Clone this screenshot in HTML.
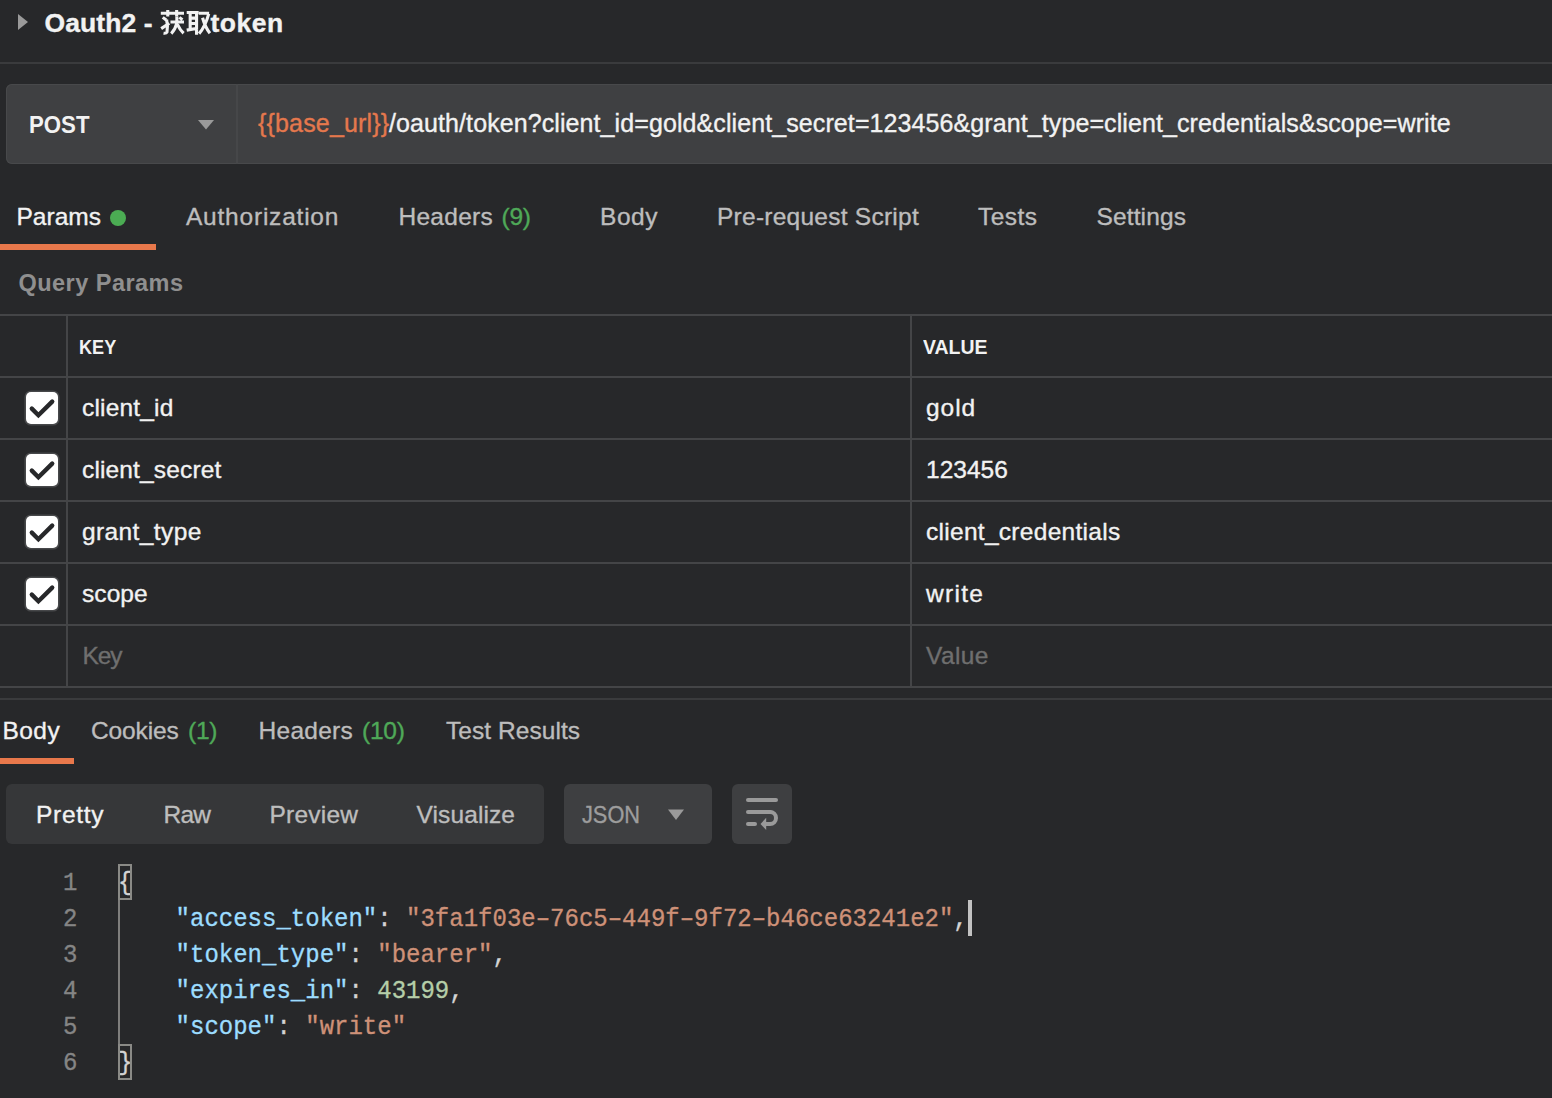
<!DOCTYPE html><html><head><meta charset="utf-8"><style>
html,body{margin:0;padding:0;}
body{width:1552px;height:1098px;overflow:hidden;background:#27282a;position:relative;font-family:'Liberation Sans', sans-serif;}
.a{position:absolute;}
.t{position:absolute;white-space:pre;line-height:1;-webkit-text-stroke:0.35px currentColor;}
</style></head><body>

<svg class="a" style="left:0;top:0" width="1552" height="1098">
<polygon points="18,14 28,22 18,30" fill="#9a9a9a"/>
</svg>
<div class="a" style="left:0;top:62px;width:1552px;height:2px;background:#3a3b3d"></div>
<div class="a" style="left:6px;top:84px;width:1560px;height:80px;border-radius:6px;background:#3f4042;box-shadow:inset 0 0 0 1px #48494b"></div>
<div class="a" style="left:236px;top:84px;width:2px;height:80px;background:#464749"></div>
<svg class="a" style="left:0;top:0" width="1552" height="300"><polygon points="198,120 214,120 206,129.5" fill="#9a9a9a"/></svg>
<div class="a" style="left:110px;top:210px;width:16px;height:16px;border-radius:50%;background:#4bac53"></div>
<div class="a" style="left:0;top:244px;width:156px;height:6px;background:#e8784b"></div>
<div class="a" style="left:0;top:314px;width:1552px;height:2px;background:#444547"></div>
<div class="a" style="left:0;top:376px;width:1552px;height:2px;background:#444547"></div>
<div class="a" style="left:0;top:438px;width:1552px;height:2px;background:#444547"></div>
<div class="a" style="left:0;top:500px;width:1552px;height:2px;background:#444547"></div>
<div class="a" style="left:0;top:562px;width:1552px;height:2px;background:#444547"></div>
<div class="a" style="left:0;top:624px;width:1552px;height:2px;background:#444547"></div>
<div class="a" style="left:0;top:686px;width:1552px;height:2px;background:#444547"></div>
<div class="a" style="left:66px;top:314px;width:2px;height:374px;background:#444547"></div>
<div class="a" style="left:910px;top:314px;width:2px;height:374px;background:#444547"></div>
<div class="a" style="left:26px;top:391.5px;width:32px;height:32.5px;border-radius:5px;background:#fff;box-shadow:0 0 0 1.6px #47484a"></div>
<svg class="a" style="left:26px;top:391.5px" width="32" height="33"><polyline points="5.8,16.6 12.4,23.2 26.2,9.6" fill="none" stroke="#27282a" stroke-width="4.4" stroke-linecap="round" stroke-linejoin="miter"/></svg>
<div class="a" style="left:26px;top:453.5px;width:32px;height:32.5px;border-radius:5px;background:#fff;box-shadow:0 0 0 1.6px #47484a"></div>
<svg class="a" style="left:26px;top:453.5px" width="32" height="33"><polyline points="5.8,16.6 12.4,23.2 26.2,9.6" fill="none" stroke="#27282a" stroke-width="4.4" stroke-linecap="round" stroke-linejoin="miter"/></svg>
<div class="a" style="left:26px;top:515.5px;width:32px;height:32.5px;border-radius:5px;background:#fff;box-shadow:0 0 0 1.6px #47484a"></div>
<svg class="a" style="left:26px;top:515.5px" width="32" height="33"><polyline points="5.8,16.6 12.4,23.2 26.2,9.6" fill="none" stroke="#27282a" stroke-width="4.4" stroke-linecap="round" stroke-linejoin="miter"/></svg>
<div class="a" style="left:26px;top:577.5px;width:32px;height:32.5px;border-radius:5px;background:#fff;box-shadow:0 0 0 1.6px #47484a"></div>
<svg class="a" style="left:26px;top:577.5px" width="32" height="33"><polyline points="5.8,16.6 12.4,23.2 26.2,9.6" fill="none" stroke="#27282a" stroke-width="4.4" stroke-linecap="round" stroke-linejoin="miter"/></svg>
<div class="a" style="left:0;top:698px;width:1552px;height:2px;background:#3a3b3d"></div>
<div class="a" style="left:0;top:758px;width:74px;height:6px;background:#e8784b"></div>
<div class="a" style="left:6px;top:784px;width:538px;height:60px;border-radius:6px;background:#363739"></div>
<div class="a" style="left:564px;top:784px;width:148px;height:60px;border-radius:6px;background:#3e3f41"></div>
<div class="a" style="left:732px;top:784px;width:60px;height:60px;border-radius:6px;background:#3e3f41"></div>
<svg class="a" style="left:0;top:780px" width="800" height="70"><polygon points="668,29.6 684,29.6 676,40" fill="#9a9a9a"/><g stroke="#9a9a9a" stroke-width="4" stroke-linecap="round" fill="none"><line x1="748" y1="20" x2="776" y2="20"/><line x1="748" y1="32" x2="770" y2="32"/><line x1="748" y1="44" x2="755" y2="44"/><path d="M770,32 a6,6 0 0 1 0,12 h-4" stroke-linecap="butt"/></g><polygon points="766.2,37.8 766.2,50 760.5,44" fill="#9a9a9a"/></svg>
<div class="t" id="t0" style="left:44.5px;top:9.77px;font-size:26.5px;font-weight:bold;color:#f2f2f2;letter-spacing:0.074px;font-family:'Liberation Sans', sans-serif">Oauth2 -</div>
<div class="t" id="t1" style="left:210.5px;top:9.77px;font-size:26.5px;font-weight:bold;color:#f2f2f2;letter-spacing:0.528px;font-family:'Liberation Sans', sans-serif">token</div>
<div class="t" id="t2" style="left:28.5px;top:113.46px;font-size:24.5px;font-weight:bold;color:#f2f2f2;transform:scaleX(0.9068);transform-origin:0 0;-webkit-text-stroke:0;font-family:'Liberation Sans', sans-serif">POST</div>
<div class="t" id="t3" style="left:258px;top:111.24px;font-size:25px;font-weight:normal;color:#e5784d;letter-spacing:0.164px;font-family:'Liberation Sans', sans-serif">{{base_url}}</div>
<div class="t" id="t4" style="left:389px;top:111.24px;font-size:25px;font-weight:normal;color:#f2f2f2;letter-spacing:0.092px;font-family:'Liberation Sans', sans-serif">/oauth/token?client_id=gold&amp;client_secret=123456&amp;grant_type=client_credentials&amp;scope=write</div>
<div class="t" id="t5" style="left:16.5px;top:205.26px;font-size:24.5px;font-weight:normal;color:#f2f2f2;letter-spacing:0.016px;font-family:'Liberation Sans', sans-serif">Params</div>
<div class="t" id="t6" style="left:186px;top:205.26px;font-size:24.5px;font-weight:normal;color:#bdbdbd;letter-spacing:0.782px;font-family:'Liberation Sans', sans-serif">Authorization</div>
<div class="t" id="t7" style="left:398.5px;top:205.26px;font-size:24.5px;font-weight:normal;color:#bdbdbd;letter-spacing:0.265px;font-family:'Liberation Sans', sans-serif">Headers</div>
<div class="t" id="t8" style="left:501.5px;top:205.26px;font-size:24.5px;font-weight:normal;color:#4fa958;letter-spacing:-0.277px;font-family:'Liberation Sans', sans-serif">(9)</div>
<div class="t" id="t9" style="left:600px;top:205.26px;font-size:24.5px;font-weight:normal;color:#bdbdbd;letter-spacing:0.552px;font-family:'Liberation Sans', sans-serif">Body</div>
<div class="t" id="t10" style="left:717px;top:205.26px;font-size:24.5px;font-weight:normal;color:#bdbdbd;letter-spacing:0.251px;font-family:'Liberation Sans', sans-serif">Pre-request Script</div>
<div class="t" id="t11" style="left:978px;top:205.26px;font-size:24.5px;font-weight:normal;color:#bdbdbd;letter-spacing:0.453px;font-family:'Liberation Sans', sans-serif">Tests</div>
<div class="t" id="t12" style="left:1096.5px;top:205.26px;font-size:24.5px;font-weight:normal;color:#bdbdbd;letter-spacing:0.124px;font-family:'Liberation Sans', sans-serif">Settings</div>
<div class="t" id="t13" style="left:18.5px;top:272.11px;font-size:23.5px;font-weight:bold;color:#8f8f8f;letter-spacing:0.466px;-webkit-text-stroke:0;font-family:'Liberation Sans', sans-serif">Query Params</div>
<div class="t" id="t14" style="left:78.5px;top:337.07px;font-size:20px;font-weight:bold;color:#f2f2f2;transform:scaleX(0.9046);transform-origin:0 0;-webkit-text-stroke:0;font-family:'Liberation Sans', sans-serif">KEY</div>
<div class="t" id="t15" style="left:922.5px;top:337.07px;font-size:20px;font-weight:bold;color:#f2f2f2;transform:scaleX(0.9712);transform-origin:0 0;-webkit-text-stroke:0;font-family:'Liberation Sans', sans-serif">VALUE</div>
<div class="t" id="t16" style="left:82px;top:395.66px;font-size:24.5px;font-weight:normal;color:#f2f2f2;letter-spacing:0.176px;font-family:'Liberation Sans', sans-serif">client_id</div>
<div class="t" id="t17" style="left:926px;top:395.66px;font-size:24.5px;font-weight:normal;color:#f2f2f2;letter-spacing:0.957px;font-family:'Liberation Sans', sans-serif">gold</div>
<div class="t" id="t18" style="left:82px;top:457.66px;font-size:24.5px;font-weight:normal;color:#f2f2f2;letter-spacing:0.146px;font-family:'Liberation Sans', sans-serif">client_secret</div>
<div class="t" id="t19" style="left:926px;top:457.66px;font-size:24.5px;font-weight:normal;color:#f2f2f2;letter-spacing:0.027px;font-family:'Liberation Sans', sans-serif">123456</div>
<div class="t" id="t20" style="left:82px;top:519.66px;font-size:24.5px;font-weight:normal;color:#f2f2f2;letter-spacing:0.391px;font-family:'Liberation Sans', sans-serif">grant_type</div>
<div class="t" id="t21" style="left:926px;top:519.66px;font-size:24.5px;font-weight:normal;color:#f2f2f2;letter-spacing:0.288px;font-family:'Liberation Sans', sans-serif">client_credentials</div>
<div class="t" id="t22" style="left:82px;top:581.66px;font-size:24.5px;font-weight:normal;color:#f2f2f2;letter-spacing:0.077px;font-family:'Liberation Sans', sans-serif">scope</div>
<div class="t" id="t23" style="left:926px;top:581.66px;font-size:24.5px;font-weight:normal;color:#f2f2f2;letter-spacing:1.291px;font-family:'Liberation Sans', sans-serif">write</div>
<div class="t" id="t24" style="left:82.5px;top:643.66px;font-size:24.5px;font-weight:normal;color:#6f6f6f;letter-spacing:-1.159px;font-family:'Liberation Sans', sans-serif">Key</div>
<div class="t" id="t25" style="left:926px;top:643.66px;font-size:24.5px;font-weight:normal;color:#6f6f6f;letter-spacing:0.364px;font-family:'Liberation Sans', sans-serif">Value</div>
<div class="t" id="t26" style="left:2.5px;top:718.96px;font-size:24.5px;font-weight:normal;color:#f2f2f2;letter-spacing:0.452px;font-family:'Liberation Sans', sans-serif">Body</div>
<div class="t" id="t27" style="left:91px;top:718.96px;font-size:24.5px;font-weight:normal;color:#bdbdbd;letter-spacing:-0.136px;font-family:'Liberation Sans', sans-serif">Cookies</div>
<div class="t" id="t28" style="left:188px;top:718.96px;font-size:24.5px;font-weight:normal;color:#4fa958;letter-spacing:-0.277px;font-family:'Liberation Sans', sans-serif">(1)</div>
<div class="t" id="t29" style="left:258.5px;top:718.96px;font-size:24.5px;font-weight:normal;color:#bdbdbd;letter-spacing:0.282px;font-family:'Liberation Sans', sans-serif">Headers</div>
<div class="t" id="t30" style="left:362px;top:718.96px;font-size:24.5px;font-weight:normal;color:#4fa958;letter-spacing:-0.226px;font-family:'Liberation Sans', sans-serif">(10)</div>
<div class="t" id="t31" style="left:446px;top:718.96px;font-size:24.5px;font-weight:normal;color:#bdbdbd;letter-spacing:0.051px;font-family:'Liberation Sans', sans-serif">Test Results</div>
<div class="t" id="t32" style="left:36px;top:803.26px;font-size:24.5px;font-weight:normal;color:#f2f2f2;letter-spacing:0.700px;font-family:'Liberation Sans', sans-serif">Pretty</div>
<div class="t" id="t33" style="left:163.5px;top:803.26px;font-size:24.5px;font-weight:normal;color:#bdbdbd;letter-spacing:-0.758px;font-family:'Liberation Sans', sans-serif">Raw</div>
<div class="t" id="t34" style="left:269.5px;top:803.26px;font-size:24.5px;font-weight:normal;color:#bdbdbd;letter-spacing:0.227px;font-family:'Liberation Sans', sans-serif">Preview</div>
<div class="t" id="t35" style="left:416.5px;top:803.26px;font-size:24.5px;font-weight:normal;color:#bdbdbd;letter-spacing:0.111px;font-family:'Liberation Sans', sans-serif">Visualize</div>
<div class="t" id="t36" style="left:582px;top:803.26px;font-size:24.5px;font-weight:normal;color:#9d9d9d;transform:scaleX(0.8876);transform-origin:0 0;font-family:'Liberation Sans', sans-serif">JSON</div>
<svg class="a" style="left:155px;top:5px" width="60" height="35" viewBox="0 0 1552 905"><g fill="none" stroke="#f2f2f2" stroke-width="80" stroke-linecap="butt" stroke-linejoin="miter">
<path d="M150,215 H750 M330,130 V300 M560,130 V300"/>
<path d="M200,320 L290,390 M300,380 Q340,560 310,700 Q290,740 220,730 M160,610 L370,470"/>
<path d="M400,440 H750 M565,300 V470 Q520,640 420,740 M580,500 Q650,650 740,730 M630,320 L710,380"/>
<path d="M820,195 H1130 M910,220 V630 M1075,195 V770 M910,340 H1075 M910,480 H1075 M820,650 L1110,600"/>
<path d="M1130,215 H1400 M1390,230 Q1300,560 1140,740 M1230,330 Q1300,580 1420,730"/>
</g></svg>
<div class="a" id="ln1" style="left:63px;top:866px;font:24px/36px 'Liberation Mono', monospace;letter-spacing:0px;color:#858585;white-space:pre;-webkit-text-stroke:0.3px currentColor;transform:scaleY(1.1);transform-origin:0 24px">1</div>
<div class="a" id="code1" style="left:118px;top:866px;font:24px/36px 'Liberation Mono', monospace;letter-spacing:0px;white-space:pre;-webkit-text-stroke:0.3px currentColor;transform:scaleY(1.1);transform-origin:0 24px"><span style="color:#d4d4d4">{</span></div>
<div class="a" id="ln2" style="left:63px;top:902px;font:24px/36px 'Liberation Mono', monospace;letter-spacing:0px;color:#858585;white-space:pre;-webkit-text-stroke:0.3px currentColor;transform:scaleY(1.1);transform-origin:0 24px">2</div>
<div class="a" id="code2" style="left:118px;top:902px;font:24px/36px 'Liberation Mono', monospace;letter-spacing:0px;white-space:pre;-webkit-text-stroke:0.3px currentColor;transform:scaleY(1.1);transform-origin:0 24px">    <span style="color:#9cdcfe">&quot;access_token&quot;</span><span style="color:#d4d4d4">: </span><span style="color:#ce9178">&quot;3fa1f03e–76c5–449f–9f72–b46ce63241e2&quot;</span><span style="color:#d4d4d4">,</span></div>
<div class="a" id="ln3" style="left:63px;top:938px;font:24px/36px 'Liberation Mono', monospace;letter-spacing:0px;color:#858585;white-space:pre;-webkit-text-stroke:0.3px currentColor;transform:scaleY(1.1);transform-origin:0 24px">3</div>
<div class="a" id="code3" style="left:118px;top:938px;font:24px/36px 'Liberation Mono', monospace;letter-spacing:0px;white-space:pre;-webkit-text-stroke:0.3px currentColor;transform:scaleY(1.1);transform-origin:0 24px">    <span style="color:#9cdcfe">&quot;token_type&quot;</span><span style="color:#d4d4d4">: </span><span style="color:#ce9178">&quot;bearer&quot;</span><span style="color:#d4d4d4">,</span></div>
<div class="a" id="ln4" style="left:63px;top:974px;font:24px/36px 'Liberation Mono', monospace;letter-spacing:0px;color:#858585;white-space:pre;-webkit-text-stroke:0.3px currentColor;transform:scaleY(1.1);transform-origin:0 24px">4</div>
<div class="a" id="code4" style="left:118px;top:974px;font:24px/36px 'Liberation Mono', monospace;letter-spacing:0px;white-space:pre;-webkit-text-stroke:0.3px currentColor;transform:scaleY(1.1);transform-origin:0 24px">    <span style="color:#9cdcfe">&quot;expires_in&quot;</span><span style="color:#d4d4d4">: </span><span style="color:#b5cea8">43199</span><span style="color:#d4d4d4">,</span></div>
<div class="a" id="ln5" style="left:63px;top:1010px;font:24px/36px 'Liberation Mono', monospace;letter-spacing:0px;color:#858585;white-space:pre;-webkit-text-stroke:0.3px currentColor;transform:scaleY(1.1);transform-origin:0 24px">5</div>
<div class="a" id="code5" style="left:118px;top:1010px;font:24px/36px 'Liberation Mono', monospace;letter-spacing:0px;white-space:pre;-webkit-text-stroke:0.3px currentColor;transform:scaleY(1.1);transform-origin:0 24px">    <span style="color:#9cdcfe">&quot;scope&quot;</span><span style="color:#d4d4d4">: </span><span style="color:#ce9178">&quot;write&quot;</span></div>
<div class="a" id="ln6" style="left:63px;top:1046px;font:24px/36px 'Liberation Mono', monospace;letter-spacing:0px;color:#858585;white-space:pre;-webkit-text-stroke:0.3px currentColor;transform:scaleY(1.1);transform-origin:0 24px">6</div>
<div class="a" id="code6" style="left:118px;top:1046px;font:24px/36px 'Liberation Mono', monospace;letter-spacing:0px;white-space:pre;-webkit-text-stroke:0.3px currentColor;transform:scaleY(1.1);transform-origin:0 24px"><span style="color:#d4d4d4">}</span></div>
<div class="a" style="left:118px;top:864px;width:10px;height:32px;border:2px solid #8a8a86"></div>
<div class="a" style="left:118px;top:1044px;width:10px;height:32px;border:2px solid #8a8a86"></div>
<div class="a" style="left:118px;top:900px;width:2px;height:144px;background:#7e7e7c"></div>
<div class="a" style="left:968px;top:900px;width:4px;height:36px;background:#c2c2c2"></div>
</body></html>
